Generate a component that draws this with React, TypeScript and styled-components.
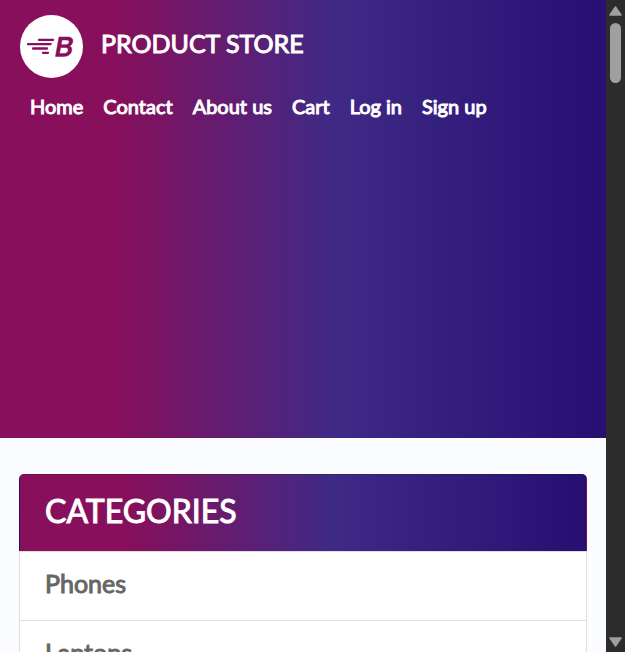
import React from "react";
import styled, { createGlobalStyle } from "styled-components";

const brandGradient =
  "linear-gradient(90deg, #870f5b 0%, #870f5b 19%, #3f2a86 55%, #281073 98%)";

const GlobalStyle = createGlobalStyle`
  *, *::before, *::after { box-sizing: border-box; }
  html, body { margin: 0; height: 100%; overflow: hidden; }
  #root { height: 100%; }
  body {
    font-family: Lato, sans-serif;
    color: #666;
    background: #fbfcff;
  }
`;

const Screen = styled.div`
  display: grid;
  grid-template-columns: minmax(0, 1fr) 19px;
  height: 100vh;
`;

const Page = styled.div`
  overflow: hidden;
  background: #fbfcff;
`;

const Header = styled.header`
  min-height: 438px;
  padding: 15px 20px;
  background: ${brandGradient};
`;

const Brand = styled.a`
  display: flex;
  align-items: center;
  gap: 18px;
  width: fit-content;
  color: #fff;
  font-size: 25px;
  line-height: 32px;
  text-decoration: none;
  white-space: nowrap;

  svg {
    flex: none;
    width: 63px;
    height: 63px;
  }
`;

const BrandName = styled.span`
  padding-bottom: 8px;
  -webkit-text-stroke: 1px currentColor;
`;

const Nav = styled.nav`
  margin-top: 15px;
`;

const NavList = styled.ul`
  display: flex;
  flex-wrap: wrap;
  margin: 0;
  padding: 0;
  list-style: none;
`;

const NavLink = styled.a`
  display: block;
  padding: 0 10px;
  color: #fff;
  font-size: 20px;
  -webkit-text-stroke: 1px currentColor;
  line-height: 26px;
  text-decoration: none;
  white-space: nowrap;
`;

const Main = styled.main`
  padding: 36px 19px;
`;

const Categories = styled.div`
  display: flex;
  flex-direction: column;
  border-radius: 5px;
`;

const CategoryTitle = styled.a`
  display: block;
  padding: 16px 25px 20px;
  border: 1px solid rgba(0, 0, 0, 0.125);
  border-bottom: 0;
  border-radius: 5px 5px 0 0;
  background: ${brandGradient};
  color: #fff;
  font-size: 32px;
  -webkit-text-stroke: 1px currentColor;
  line-height: 40px;
  text-decoration: none;
`;

const CategoryLink = styled.a`
  display: block;
  padding: 14px 25px 20px;
  border: 1px solid #dfdfdf;
  border-bottom: 0;
  background: #fff;
  color: #666;
  font-size: 25px;
  -webkit-text-stroke: 1px currentColor;
  line-height: 34px;
  text-decoration: none;
`;

const ScrollTrack = styled.div`
  display: flex;
  flex-direction: column;
  align-items: center;
  justify-content: space-between;
  padding: 6px 0 5px;
  background: #2c2c2c;
`;

const ScrollTop = styled.div`
  display: flex;
  flex-direction: column;
  align-items: center;
  gap: 7px;
`;

const ScrollButton = styled.button`
  display: block;
  padding: 0;
  border: 0;
  background: none;
  line-height: 0;
`;

const ScrollThumb = styled.div`
  width: 11px;
  height: 60px;
  border-radius: 6px;
  background: #9f9f9f;
`;

function Logo() {
  return (
    <svg viewBox="0 0 63 63" aria-hidden="true">
      <circle cx="31.5" cy="31.5" r="31.5" fill="#fff" />
      <g stroke="#870f5b" strokeWidth="2.3" strokeLinecap="round">
        <path d="M19 24.900h14M8 29.200h22.500M13 33.500h14M23 37.800h5" />
      </g>
      <path
        fill="#870f5b"
        stroke="#870f5b"
        strokeWidth="0.5"
        fillRule="evenodd"
        d="M39 22h8.500c3.800 0 5.800 1.700 5.300 4.700-.4 2.200-1.600 3.600-3.500 4.300 2 .7 2.800 2.200 2.400 4.500-.6 3.800-3.500 5.900-7.900 5.900H35.500zM42 25l-.9 4.700h4.200c2.200 0 3.500-.8 3.800-2.500.3-1.500-.6-2.200-2.700-2.200zM40.600 32.500l-1.100 5.900h4.700c2.200 0 3.500-.9 3.900-2.900.4-2-.7-3-3-3z"
      />
    </svg>
  );
}

const navItems = ["Home", "Contact", "About us", "Cart", "Log in", "Sign up"];
const categories = ["Phones", "Laptops", "Monitors"];

export default function App() {
  return (
    <Screen>
      <GlobalStyle />
      <Page>
        <Header>
          <Brand href="#">
            <Logo />
            <BrandName>PRODUCT STORE</BrandName>
          </Brand>
          <Nav aria-label="Main">
            <NavList>
              {navItems.map((item) => (
                <li key={item}>
                  <NavLink href="#">{item}</NavLink>
                </li>
              ))}
            </NavList>
          </Nav>
        </Header>
        <Main>
          <Categories>
            <CategoryTitle href="#">CATEGORIES</CategoryTitle>
            {categories.map((name) => (
              <CategoryLink key={name} href="#">
                {name}
              </CategoryLink>
            ))}
          </Categories>
        </Main>
      </Page>
      <ScrollTrack>
        <ScrollTop>
          <ScrollButton type="button" aria-label="Scroll up">
            <svg width="13" height="10" viewBox="0 0 13 10">
              <path d="M6.500 1 12 9H1z" fill="#9f9f9f" stroke="#9f9f9f" strokeWidth="1.500" strokeLinejoin="round" />
            </svg>
          </ScrollButton>
          <ScrollThumb />
        </ScrollTop>
        <ScrollButton type="button" aria-label="Scroll down">
          <svg width="13" height="10" viewBox="0 0 13 10">
            <path d="M6.500 9 1 1h11z" fill="#9f9f9f" stroke="#9f9f9f" strokeWidth="1.500" strokeLinejoin="round" />
          </svg>
        </ScrollButton>
      </ScrollTrack>
    </Screen>
  );
}
